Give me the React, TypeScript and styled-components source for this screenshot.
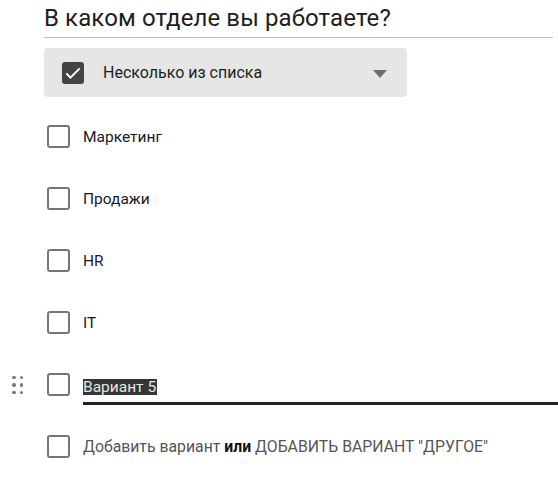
import React from "react";
import styled, { createGlobalStyle } from "styled-components";

const Global = createGlobalStyle`
  html, body { margin: 0; padding: 0; background: #fff; }
  body { font-family: Roboto, "Noto Sans", Arial, sans-serif; color: #222; }
`;

const Page = styled.div`
  width: 558px;
  height: 486px;
  overflow: hidden;
  display: flex;
  flex-direction: column;
`;

const TitleWrap = styled.div`
  margin: 0 5px 0 44px;
  height: 37px;
  border-bottom: 1px solid #bdbdbd;
  display: flex;
  align-items: flex-end;
`;

const Title = styled.h1`
  margin: 0 0 5px;
  font-size: 24px;
  font-weight: 400;
  line-height: 28px;
  color: #1e1e1e;
  letter-spacing: 0.1px;
`;

const TypeSelect = styled.div`
  margin: 10px 0 0 44px;
  width: 363px;
  height: 49px;
  box-sizing: border-box;
  background: #e6e6e6;
  border-radius: 4px;
  display: flex;
  align-items: center;
  padding: 0 20px 0 18px;
  gap: 19px;
`;

const CheckedBox = styled.span`
  width: 22px;
  height: 22px;
  border-radius: 3px;
  background: #444;
  display: flex;
  align-items: center;
  justify-content: center;
  flex: none;
`;

const TypeLabel = styled.span`
  flex: 1;
  font-size: 16px;
  color: #1e1e1e;
`;

const Arrow = styled.span`
  width: 0;
  height: 0;
  border-left: 7.5px solid transparent;
  border-right: 7.5px solid transparent;
  border-top: 8px solid #6f6f6f;
  margin-top: 2px;
`;

const List = styled.div`
  margin-top: 8px;
  display: flex;
  flex-direction: column;
`;

const Row = styled.div`
  height: 62px;
  display: grid;
  grid-template-columns: 34px 23px 1fr;
  column-gap: 13px;
  align-items: center;
`;

const Handle = styled.span`
  justify-self: start;
  margin-left: 12px;
  margin-top: 2px;
  display: grid;
  grid-template-columns: repeat(2, 3.5px);
  grid-auto-rows: 3.5px;
  column-gap: 4px;
  row-gap: 4px;
  span {
    background: #7a7a7a;
    border-radius: 50%;
  }
`;

const Box = styled.span`
  grid-column: 2;
  width: 23px;
  height: 23px;
  box-sizing: border-box;
  border: 2px solid #767676;
  border-radius: 3px;
`;

const Label = styled.span`
  font-size: 15.5px;
  color: #1a1a1a;
  margin-top: 2px;
`;

const Field = styled.div`
  align-self: start;
  height: 52px;
  box-sizing: border-box;
  padding-top: 18px;
  border-bottom: 3px solid #222;
  display: flex;
  align-items: center;
`;

const Selected = styled.span`
  font-size: 15.5px;
  line-height: 16px;
  padding: 0 1px 0 0;
  background: #353535;
  color: #e6e6e6;
`;

const AddText = styled.span`
  font-size: 15.8px;
  color: #555;
  margin-top: 1px;
  b {
    color: #111;
    font-weight: 700;
  }
`;

const options = ["Маркетинг", "Продажи", "HR", "IT"];

export default function App() {
  return (
    <Page>
      <Global />
      <TitleWrap>
        <Title>В каком отделе вы работаете?</Title>
      </TitleWrap>
      <TypeSelect>
        <CheckedBox>
          <svg width="20" height="20" viewBox="0 0 24 24">
            <path d="M4 12.5l5 5L20 6.5" fill="none" stroke="#fff" strokeWidth="2.4" />
          </svg>
        </CheckedBox>
        <TypeLabel>Несколько из списка</TypeLabel>
        <Arrow />
      </TypeSelect>
      <List>
        {options.map((o) => (
          <Row key={o}>
            <Box />
            <Label>{o}</Label>
          </Row>
        ))}
        <Row>
          <Handle>
            <span /><span /><span /><span /><span /><span />
          </Handle>
          <Box />
          <Field>
            <Selected>Вариант 5</Selected>
          </Field>
        </Row>
        <Row>
          <Box />
          <AddText>
            Добавить вариант <b>или</b> ДОБАВИТЬ ВАРИАНТ "ДРУГОЕ"
          </AddText>
        </Row>
      </List>
    </Page>
  );
}
